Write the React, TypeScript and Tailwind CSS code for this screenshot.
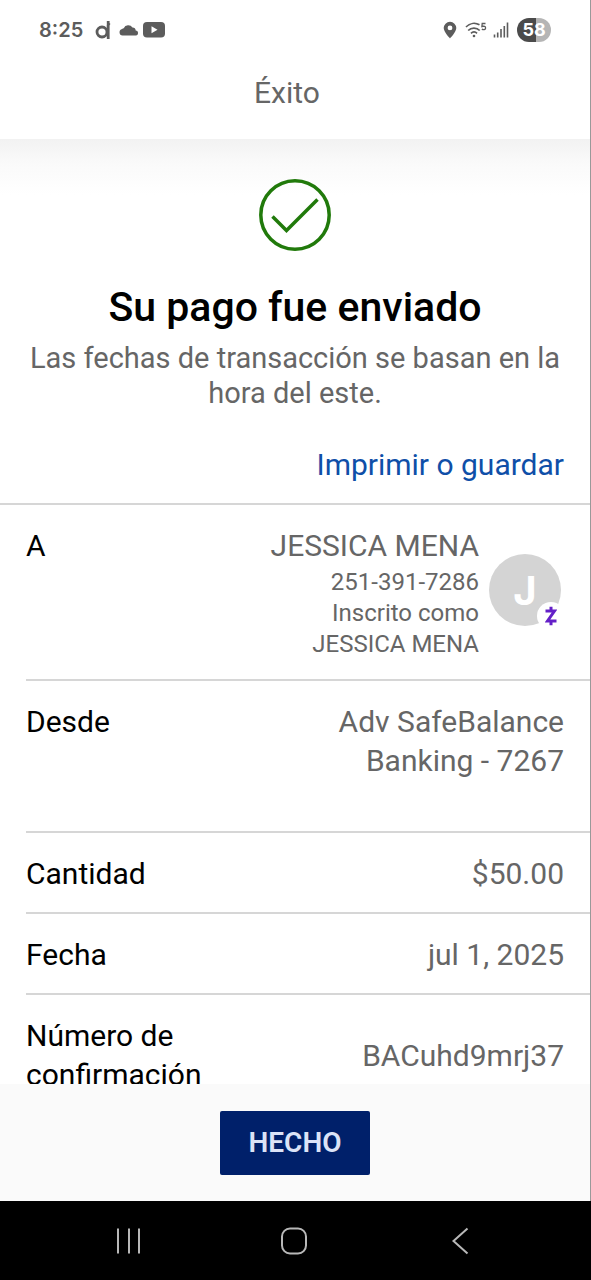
import React from "react";

const StatusBar = () => {
  return (
    <div className="flex h-15 items-center justify-between px-[39px] text-[#5c5c5c]">
      <div className="flex items-center">
        <span className="font-['Inter',sans-serif] text-xl font-semibold">8:25</span>
        <svg className="ml-3 h-5 w-4" viewBox="0 0 16 20" fill="none" stroke="currentColor" strokeWidth="2.8">
          <circle cx="7" cy="12" r="5" />
          <path d="M13.2 1v18" />
          <path d="M12 6.5l3-3" strokeWidth="1.5" />
        </svg>
        <svg className="ml-2 h-3 w-5" viewBox="0 0 20 12" fill="currentColor">
          <path d="M3.5 11.5a3.3 3.3 0 0 1-.4-6.5 2.8 2.8 0 0 1 1.600-.8A5 5 0 0 1 13.500 3.600a3.200 3.200 0 0 1 3.200 3 2.500 2.500 0 0 1 .6 4.900z" />
        </svg>
        <svg className="ml-1 h-4 w-[22px]" viewBox="0 0 22 16">
          <rect width="22" height="15.5" rx="4" fill="currentColor" />
          <path d="M8.5 4.3v7l6-3.500z" fill="#fff" />
        </svg>
      </div>
      <div className="flex items-center">
        <svg className="h-[18px] w-3.5" viewBox="0 0 14 18" fill="currentColor">
          <path
            fillRule="evenodd"
            d="M7 .8A6.3 6.3 0 0 0 .7 7.1C.7 11.2 7 17.5 7 17.5s6.3-6.3 6.3-10.4A6.3 6.3 0 0 0 7 .8zM7 4.5a2.4 2.4 0 1 1 0 4.8 2.4 2.4 0 0 1 0-4.8z"
          />
        </svg>
        <svg className="ml-2 h-4 w-[22px]" viewBox="0 0 22 16" fill="none" stroke="currentColor">
          <path d="M1 5C5 .8 10.5 .6 14.5 2.8M3.2 8.5c3-3.3 8.5-3.3 11.5 0M6 11.3c1.7-1.8 4.3-1.8 6 0" strokeWidth="1.7" />
          <circle cx="9" cy="14" r="1.3" fill="currentColor" stroke="none" />
          <path d="M20.5 1.5h-3.300l-.3 3c2.200-.6 3.700 0 3.700 1.500 0 1.600-2 2.100-3.800 1.100" strokeWidth="1.3" />
        </svg>
        <svg className="ml-1.5 h-4 w-4" viewBox="0 0 16 16" stroke="currentColor" strokeWidth="1.6">
          <path d="M1.5 12.5v3M4.7 10.5v5M8 7v8.5M11.3 4v11.5M14.5 .5v15" />
        </svg>
        <div className="ml-2 flex h-6 w-[34px] items-center justify-center rounded-full bg-linear-to-r from-[#4b4b4b] from-55% to-[#b5b5b5] to-55% font-['Inter',sans-serif] text-lg font-bold text-white">
          58
        </div>
      </div>
    </div>
  );
};

const Row = ({ label, children }: { label: string; children: React.ReactNode }) => {
  return (
    <div className="ml-[26px] flex items-center justify-between border-b-2 border-[#d6d6d6] pt-[21px] pr-[26px] pb-[19px] text-3xl/[39px]">
      <dt className="max-w-[200px] self-start text-black">{label}</dt>
      <dd className="text-right text-[#666]">{children}</dd>
    </div>
  );
};

const Avatar = () => {
  return (
    <div className="relative mt-7 mr-[3px] flex size-[72px] items-center justify-center rounded-full bg-[#d4d4d4] font-['Inter',sans-serif] text-[40px] font-bold text-white">
      J
      <span className="absolute -right-1 -bottom-1 flex size-7 items-center justify-center rounded-full bg-white">
        <svg className="h-5 w-3" viewBox="0 0 12 20" fill="none" stroke="#6420c8" strokeWidth="3">
          <path d="M.5 5h9L2.5 15H11.5M6 .8V4M6 16v3.2" />
        </svg>
      </span>
    </div>
  );
};

const SystemNav = () => {
  return (
    <nav className="flex h-[79px] shrink-0 items-center justify-around bg-black pr-12 pl-[46px] text-[#b8b8b8]">
      <button aria-label="Recientes">
        <svg className="h-7 w-7" viewBox="0 0 28 28" stroke="currentColor" strokeWidth="2">
          <path d="M3 1.5v25M14 1.5v25M24 1.5v25" />
        </svg>
      </button>
      <button aria-label="Inicio">
        <svg className="h-7 w-7" viewBox="0 0 28 28" fill="none" stroke="currentColor" strokeWidth="2">
          <rect x="2" y="1.5" width="24" height="25" rx="8" />
        </svg>
      </button>
      <button aria-label="Atrás">
        <svg className="h-7 w-7" viewBox="0 0 28 28" fill="none" stroke="currentColor" strokeWidth="2">
          <path d="M21.5 1.5 7.5 14l14 12.5" />
        </svg>
      </button>
    </nav>
  );
};

const App = () => {
  return (
    <div className="flex h-screen flex-col bg-white font-['Roboto',sans-serif]">
      <div className="flex min-h-0 flex-1 flex-col border-r border-[#999]">
        <header className="shrink-0">
          <StatusBar />
          <h1 className="pt-3 pr-4 pb-[25px] text-center text-3xl/[42px] text-[#666]">Éxito</h1>
        </header>

        <main className="min-h-0 flex-1 overflow-hidden">
          {/* Confirmation */}
          <section className="bg-linear-to-b from-[#f2f2f2] via-[#fafafa] via-[24px] to-white to-[56px] px-[26px] pt-10 text-center">
            <svg className="mx-auto size-[72px]" viewBox="0 0 72 72" fill="none" stroke="#217a0b" strokeWidth="3.5">
              <circle cx="36" cy="36" r="34.2" />
              <path d="M13.5 37.5 27.5 51.5 58.5 20.5" />
            </svg>
            <h2 className="mt-8 text-[41px]/[48px] font-medium text-black">Su pago fue enviado</h2>
            <p className="mt-2.5 text-[29px]/[35px] text-[#666]">
              Las fechas de transacción se basan en la
              <br />
              hora del este.
            </p>
          </section>
          <div className="flex justify-end border-b-2 border-[#d6d6d6] px-[26px] pt-[34px] pb-[19px]">
            <a href="#imprimir" className="text-3xl/[39px] text-[#0f4fa8]">
              Imprimir o guardar
            </a>
          </div>

          {/* Details */}
          <dl>
            <Row label="A">
              <div className="flex items-start gap-2.5">
                <div>
                  <p className="mb-0.5">JESSICA MENA</p>
                  <p className="text-2xl/[31px]">251-391-7286</p>
                  <p className="text-2xl/[31px]">Inscrito como</p>
                  <p className="text-2xl/[31px]">JESSICA MENA</p>
                </div>
                <Avatar />
              </div>
            </Row>
            <Row label="Desde">
              <p className="mb-8">
                Adv SafeBalance
                <br />
                Banking - 7267
              </p>
            </Row>
            <Row label="Cantidad">$50.00</Row>
            <Row label="Fecha">jul 1, 2025</Row>
            <Row label="Número de confirmación">BACuhd9mrj37</Row>
          </dl>
        </main>

        <footer className="flex h-[117px] shrink-0 items-center justify-center bg-[#fafafa]">
          <button className="rounded-xs bg-[#00206a] px-7 py-4 text-[28px]/8 font-semibold text-[#dbe3f7]">HECHO</button>
        </footer>
      </div>
      <SystemNav />
    </div>
  );
};

export default App;
